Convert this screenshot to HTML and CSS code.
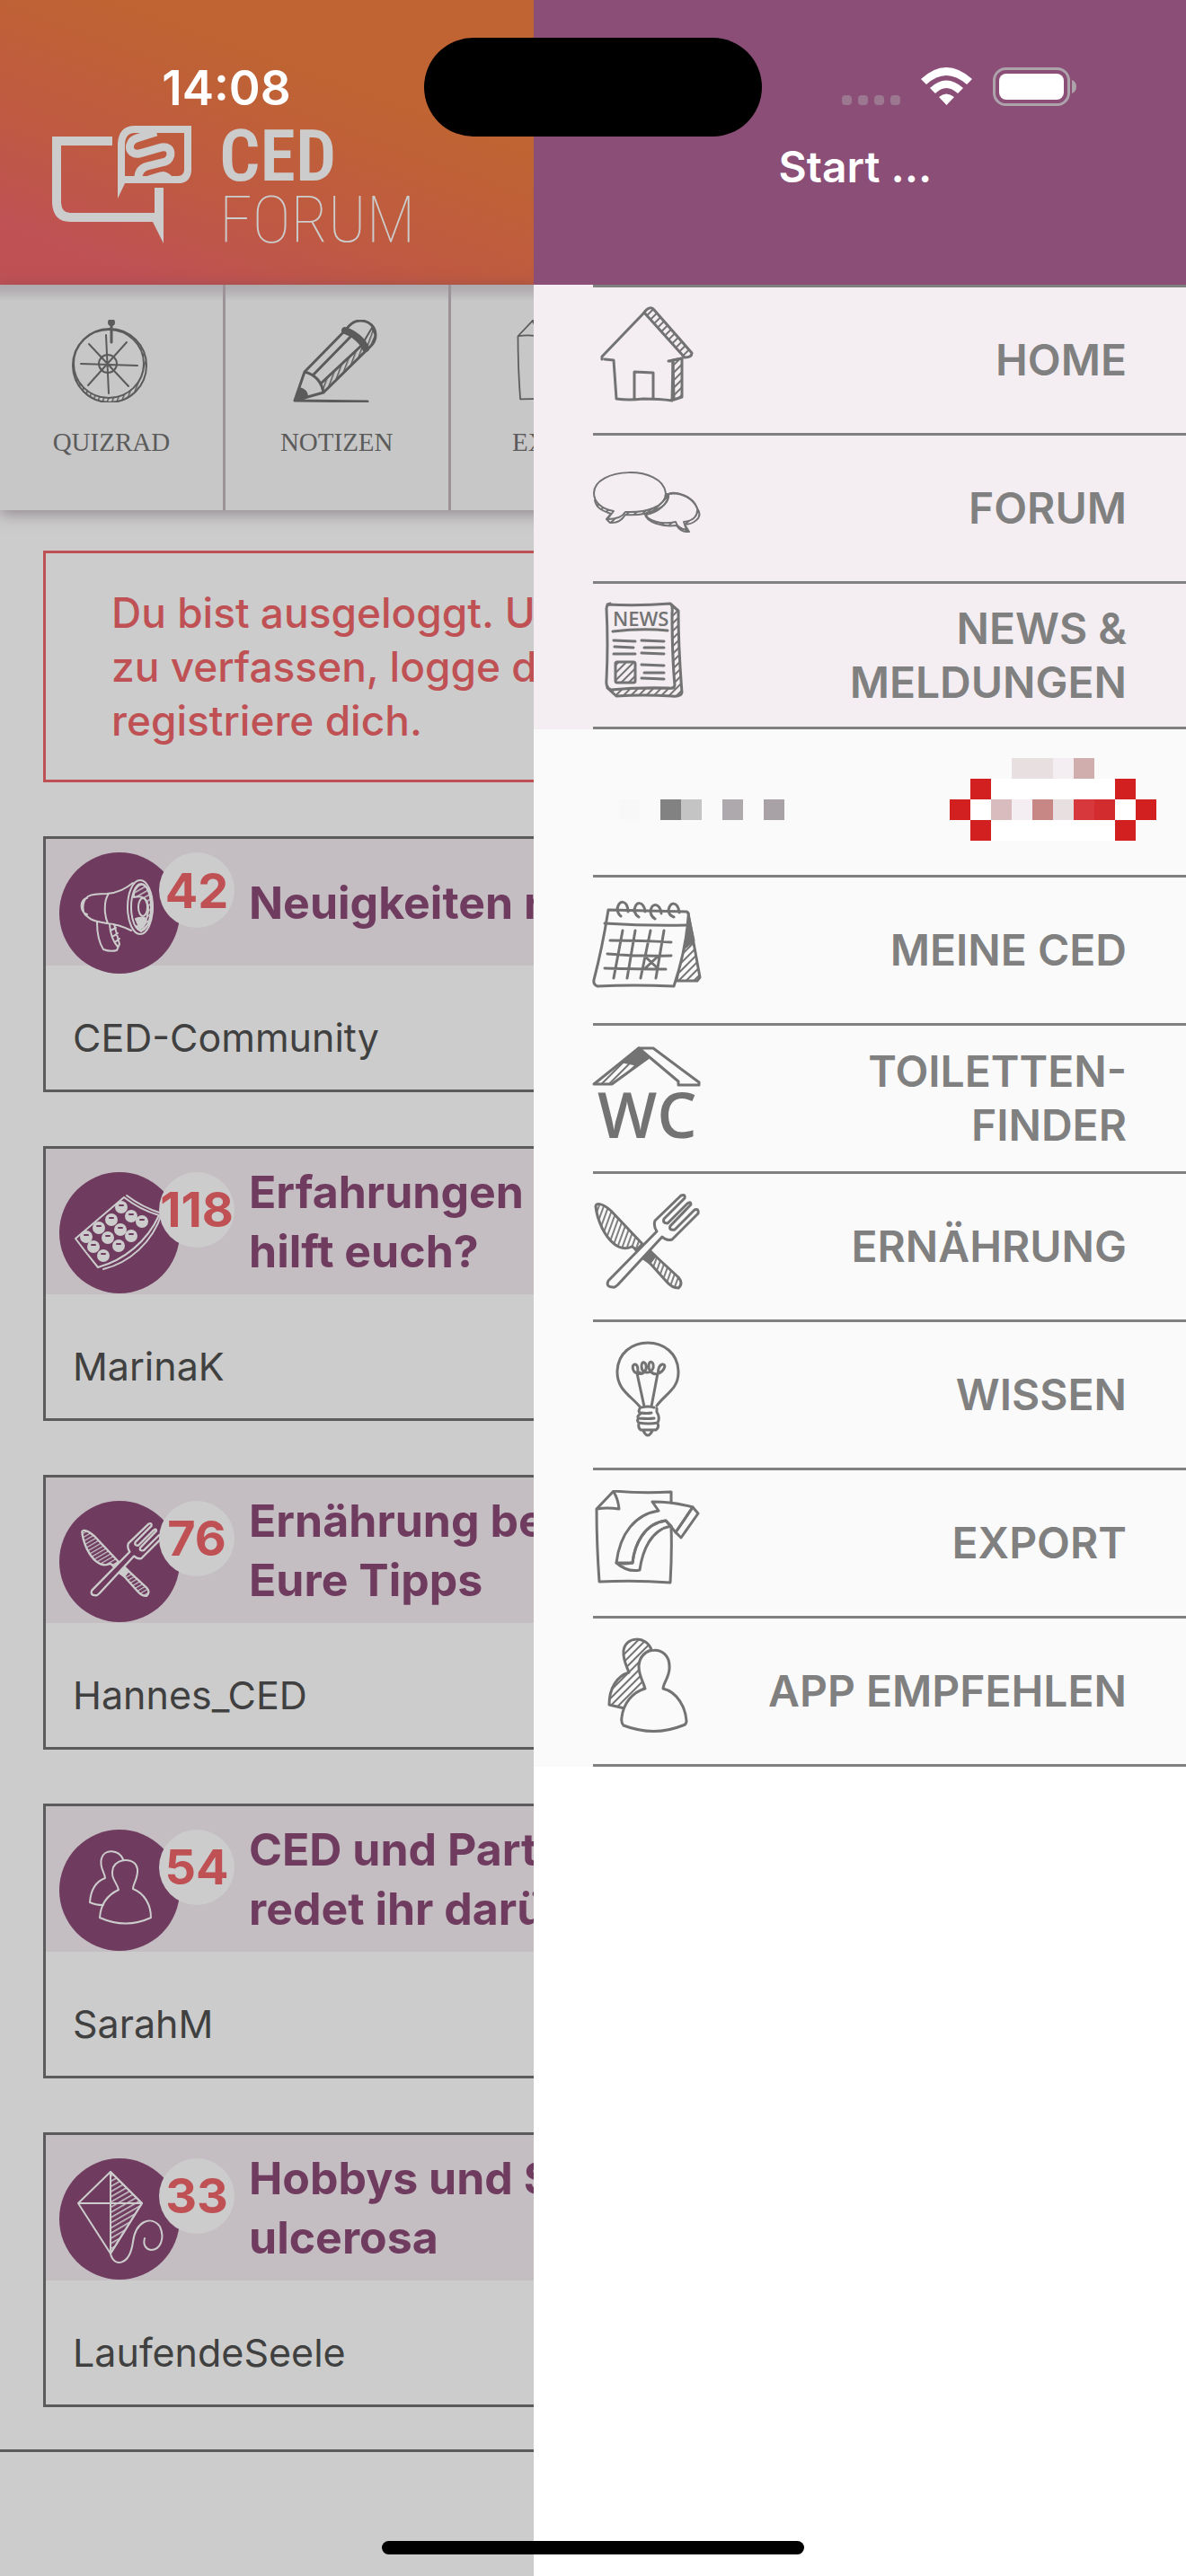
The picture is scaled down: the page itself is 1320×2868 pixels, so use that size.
FILE: index.html
```html
<!DOCTYPE html>
<html lang="de">
<head>
<meta charset="utf-8">
<meta name="viewport" content="width=device-width, initial-scale=1">
<title>CED Forum</title>
<link rel="stylesheet" href="styles.css">
</head>
<body>
<svg class="defs" aria-hidden="true">
  <defs>
    <pattern id="hatch" width="6" height="6" patternUnits="userSpaceOnUse" patternTransform="rotate(45)"><path d="M0 0V6" stroke="#737373" stroke-width="4"/></pattern>
    <pattern id="hatch-dark" width="5" height="5" patternUnits="userSpaceOnUse" patternTransform="rotate(20)"><path d="M0 0V5" stroke="#5b5b5b" stroke-width="3"/></pattern>
    <pattern id="hatch-back" width="5" height="5" patternUnits="userSpaceOnUse" patternTransform="rotate(20)"><path d="M0 0V5" stroke="#808080" stroke-width="4"/></pattern>
    <pattern id="hatch-light" width="5" height="5" patternUnits="userSpaceOnUse" patternTransform="rotate(60)"><path d="M0 0V5" stroke="#ccc" stroke-width="3"/></pattern>
    <symbol id="export" viewBox="0 0 120 106">
      <path d="M87 14V2Q55 4 23 1L4 21Q4 60 7 102Q48 100 86 103Q88 70 87 41M23 2Q28 10 29 21Q16 19 4 21"/>
      <path class="hatched" d="M111 19L117 26L98 53L92 47ZM81 34C57 37 46 61 44 81L26 81C34 88 42 91 52 89C55 68 64 44 87 40Z"/>
      <path d="M26 81C30 48 47 27 73 23L66 13Q90 13 111 19L92 47L81 34C57 37 46 61 44 81Q34 83 26 81Z"/>
    </symbol>
  </defs>
</svg>

<div class="app">
  <header class="app-header">
    <a class="logo" href="#">
      <svg class="logo-mark" viewBox="0 0 156 131" aria-hidden="true">
        <g fill="none" stroke="#ccc" stroke-width="10">
          <path d="M67 17H5V86Q6 102 20 102H124M119 69V102"/>
          <path stroke-width="8" d="M77 62V20Q78 4 92 4H151V50Q150 60 140 60H77Z"/>
          <path stroke-width="9" d="M116 7L94 14C83 18 84 33 97 31L122 24C135 22 134 37 126 40L106 45C99 47 96 51 96 58"/>
        </g>
        <path fill="#ccc" d="M110 103L124 131V96ZM73 56V81L82 62ZM98 58C106 57 114 52 124 51Q130 52 135 58Z"/>
      </svg>
      <span class="logo-name"><strong class="logo-ced">CED</strong><span class="logo-forum">FORUM</span></span>
    </a>
  </header>

  <nav class="toolbar" aria-label="Schnellzugriff">
    <button class="tool" type="button">
      <svg class="tool-icon" viewBox="0 0 104 92" aria-hidden="true">
        <ellipse class="hatched" cx="50" cy="51" rx="41" ry="41"/>
        <ellipse fill="#c7c7c7" cx="49" cy="49" rx="39" ry="38"/>
        <circle cx="48" cy="49" r="10"/>
        <path d="M46 17L49 82M18 49L81 51M27 27L71 74M69 25L26 73"/>
        <circle class="solid" cx="52" cy="3" r="3"/><path stroke-width="3" d="M52 5V25"/>
      </svg>
      <span>QUIZRAD</span>
    </button>
    <button class="tool" type="button">
      <svg class="tool-icon" viewBox="0 0 104 92" aria-hidden="true">
        <path class="hatched" d="M79 29L34 71L37 81L90 29L95 17L91 9Z"/>
        <path stroke-width="3" d="M5 90L16 58L62 11C67 4 72 1 78 1C88 1 95 8 95 17C95 22 93 26 90 29L37 81L5 90M67 19L25 62M79 29L34 71M16 58C27 61 35 69 37 81M5 90L86 91"/>
        <path stroke-width="8" d="M61 12C71 15 81 24 84 32"/>
        <path class="solid" d="M10 76Q19 78 19 86L5 90Z"/>
      </svg>
      <span>NOTIZEN</span>
    </button>
    <button class="tool" type="button">
      <svg class="tool-icon" viewBox="0 0 120 106" aria-hidden="true"><use href="#export"/></svg>
      <span>EXPORT</span>
    </button>
  </nav>

  <main class="content">
    <p class="notice">Du bist ausgeloggt. Um Beiträge<br>zu verfassen, logge dich ein oder<br>registriere dich.</p>

    <article class="card">
      <div class="card-head">
        <div class="media">
          <svg class="media-icon" viewBox="0 0 134 135" aria-hidden="true">
            <path class="hatched" d="M83 44Q92 28 100 43Q107 62 100 79L91 88L85 82Q98 84 99 62Q98 46 83 50Z"/>
            <path class="solid" d="M85 74Q90 72 95 73L97 77Q92 86 90 85Z"/>
            <ellipse cx="90" cy="61" rx="14" ry="30"/><ellipse cx="91" cy="61" rx="11" ry="26"/><ellipse cx="93" cy="61" rx="5" ry="10"/>
            <path d="M82 34C74 40 66 45 53 46C44 46 37 46 32 49C25 54 24 68 32 72C38 78 46 77 53 79C66 80 74 84 80 87M55 46C49 54 50 70 54 79M31 51C23 51 22 67 31 69M42 78C42 90 44 100 49 108Q57 111 64 109L67 102L61 80M56 80Q57 96 65 105M57 87L63 84M59 94L65 90M62 100L67 96"/>
          </svg>
          <span class="badge">42</span>
        </div>
        <h2 class="card-title">Neuigkeiten rund</h2>
      </div>
      <p class="author">CED-Community</p>
    </article>

    <article class="card">
      <div class="card-head">
        <div class="media">
          <svg class="media-icon" viewBox="0 0 134 135" aria-hidden="true">
            <path d="M18 74L72 28Q90 42 111 48C98 77 72 98 43 106Q30 90 18 74ZM75 26Q92 39 114 46C104 78 78 101 49 108"/>
            <g class="pills"><circle cx="69" cy="39" r="6"/><circle cx="58" cy="53" r="6"/><circle cx="44" cy="62" r="6"/><circle cx="30" cy="72" r="6"/><circle cx="80" cy="49" r="6"/><circle cx="68" cy="64" r="6"/><circle cx="54" cy="73" r="6"/><circle cx="38" cy="83" r="6"/><circle cx="92" cy="55" r="6"/><circle cx="80" cy="71" r="6"/><circle cx="66" cy="82" r="6"/><circle cx="49" cy="93" r="6"/></g>
            <path stroke="#6f3c5f" d="M67 37h4M56 51h4M42 60h4M28 70h4M78 47h4M66 62h4M52 71h4M36 81h4M90 53h4M78 69h4M64 80h4M47 91h4"/>
          </svg>
          <span class="badge">118</span>
        </div>
        <h2 class="card-title">Erfahrungen – was<br>hilft euch?</h2>
      </div>
      <p class="author">MarinaK</p>
    </article>

    <article class="card">
      <div class="card-head">
        <div class="media">
          <svg class="media-icon" viewBox="0 0 134 135" aria-hidden="true">
            <g transform="translate(23 24) scale(.78)" stroke-width="3">
              <path class="hatched" d="M3 14C3 10 10 10 20 19L55 56L48 63Q45 59 43 59C28 66 16 50 10 38Q4 25 3 14ZM69 69L95 93Q101 100 95 105Q88 105 82 98L63 77Z"/>
              <path class="solid" d="M63 63L69 69L63 77L56 72Z"/>
              <path class="on-disc" d="M71 42L17 97Q14 104 22 104Q24 105 28 101L77 48Q82 53 88 51L117 22Q118 16 113 18L91 40Q84 41 86 36L109 12Q109 8 105 11L83 33Q77 33 79 28L102 5Q103 0 98 2L69 30Q67 36 71 42Z"/>
            </g>
          </svg>
          <span class="badge">76</span>
        </div>
        <h2 class="card-title">Ernährung bei CED<br>Eure Tipps</h2>
      </div>
      <p class="author">Hannes_CED</p>
    </article>

    <article class="card">
      <div class="card-head">
        <div class="media">
          <svg class="media-icon" viewBox="0 0 134 135" aria-hidden="true">
            <path d="M71 33C66 22 50 21 47 32C44 42 51 48 51 54C40 58 35 67 34 81Q40 84 49 84M66 67C64 58 56 54 60 42C65 31 85 31 87 44C88 54 82 60 82 66C95 71 102 84 102 98Q74 111 45 98C46 84 53 73 66 67Z"/>
          </svg>
          <span class="badge">54</span>
        </div>
        <h2 class="card-title">CED und Partner:<br>redet ihr darüber?</h2>
      </div>
      <p class="author">SarahM</p>
    </article>

    <article class="card">
      <div class="card-head">
        <div class="media">
          <svg class="media-icon" viewBox="0 0 134 135" aria-hidden="true">
            <path class="hatched" d="M57 15L92 50L57 106Z"/>
            <path d="M57 15L92 50L57 106L21 50ZM57 15V106M21 50H92M57 106C60 121 78 121 82 93C85 70 102 63 112 76C118 90 112 102 102 102C96 101 93 96 95 89"/>
          </svg>
          <span class="badge">33</span>
        </div>
        <h2 class="card-title">Hobbys und Sport<br>ulcerosa</h2>
      </div>
      <p class="author">LaufendeSeele</p>
    </article>
  </main>
  <footer class="app-footer"></footer>
</div>

<aside class="drawer">
  <header class="drawer-header"><h1 class="drawer-title">Start ...</h1></header>
  <nav aria-label="Hauptmenü">
    <ul class="menu menu-primary">
      <li class="menu-row"><a class="menu-link" href="#">
        <svg class="menu-icon" viewBox="0 0 120 106" aria-hidden="true">
          <path class="hatched" d="M57 6C60 1 65 -1 68 3L110 51Q110 56 102 56ZM89 59L99 57V100L90 103Z"/>
          <path d="M10 58V55L57 6M13 58L23 59L26 102Q40 104 56 102Q74 102 88 104L89 60L84 60L99 57M46 102V72L67 73V102"/>
        </svg><span>HOME</span></a></li>
      <li class="menu-row"><a class="menu-link" href="#">
        <svg class="menu-icon" viewBox="0 0 120 106" aria-hidden="true">
          <g stroke-width="2">
            <path class="hatched" d="M84 43C90 40 110 43 116 59C124 70 110 77 102 77L107 85Q98 86 93 78C76 80 60 74 58 66Z"/>
            <path class="paper" d="M84 43C100 40 112 50 116 59C117 67 112 73 101 74L104 83Q94 81 92 74C76 78 60 72 59 66C72 64 84 54 84 43Z"/>
            <path class="hatched" d="M2 50C4 60 12 62 20 65L15 71L19 75Q30 76 36 66C60 68 86 58 84 43Z"/>
            <path class="paper" d="M1 42C1 13 77 10 81 42C81 57 60 64 36 63C32 70 24 71 16 71L23 62C10 60 1 52 1 42Z"/>
          </g>
        </svg><span>FORUM</span></a></li>
      <li class="menu-row menu-row-compact"><a class="menu-link" href="#">
        <svg class="menu-icon" viewBox="0 0 120 106" aria-hidden="true">
          <path class="hatched" d="M87 2L95 9Q95 50 99 100Q98 105 88 104Q55 102 26 104L16 95H90L88 40Z"/>
          <path class="paper" d="M16 2Q50 4 86 1Q89 3 88 12Q88 60 91 92Q90 96 84 95Q50 94 20 97Q14 95 15 86Q17 45 15 7Q15 2 19 1"/>
          <path d="M22 32Q55 28 83 31M23 42L47 43M24 49L45 50M23 57L47 57M54 42L79 43M57 50L79 50M54 56L79 57M54 69L79 70M57 78H79M54 84L79 85"/>
          <rect class="hatched" x="25" y="66" width="22" height="23" rx="2"/>
          <text class="icon-news" x="22" y="26">NEWS</text>
        </svg><span>NEWS &amp;<br>MELDUNGEN</span></a></li>
    </ul>
    <ul class="menu menu-secondary">
      <li class="menu-row"><a class="menu-link menu-promo" href="#" aria-label="Partner">
        <svg class="promo-label" viewBox="0 0 8 4" shape-rendering="crispEdges" aria-hidden="true"><path fill="#f9f8f9" d="M0 2h1v1H0z"/><path fill="#828282" d="M2 2h1v1H2z"/><path fill="#c4c4c4" d="M3 2h1v1H3z"/><path fill="#aea9ad" d="M5 2h1v1H5z"/><path fill="#a8a2a6" d="M7 2h1v1H7z"/></svg>
        <svg class="promo-logo" viewBox="0 0 10 4" shape-rendering="crispEdges" aria-hidden="true"><path fill="#fff" d="M1 1h8v3H1z"/><path fill="#e8dfe0" d="M3 0h2v1H3zM5 2h1v1H5z"/><path fill="#f4eef2" d="M5 0h1v1H5zM3 2h1v1H3z"/><path fill="#d1aeae" d="M6 0h1v1H6z"/><path fill="#d21f1f" d="M1 1h1v1H1zM8 1h1v1H8zM0 2h1v1H0zM9 2h1v1H9zM1 3h1v1H1zM8 3h1v1H8z"/><path fill="#d9bcbd" d="M2 2h1v1H2z"/><path fill="#c78784" d="M4 2h1v1H4z"/><path fill="#d6383c" d="M6 2h1v1H6z"/><path fill="#d32c2e" d="M7 2h1v1H7z"/></svg>
      </a></li>
      <li class="menu-row"><a class="menu-link" href="#">
        <svg class="menu-icon" viewBox="0 0 120 106" aria-hidden="true">
          <path class="hatched" d="M106 18L119 89L116 93H93Z"/>
          <path class="solid" d="M106 20L112 48L101 57Z"/>
          <path class="paper" d="M17 14Q60 15 104 16Q107 17 106 22C104 50 98 75 90 99Q45 97 5 99Q0 97 1 92C8 65 13 40 17 14Z"/>
          <path d="M13 29Q60 32 105 31M19 48Q55 48 87 50M16 63Q50 66 87 65M13 79Q50 80 81 80M33 37L23 90M47 37L38 90M64 37L53 90M79 37L70 90M58 66L72 79M72 66L57 80M27 15C27 2 39 2 39 16M31 21Q27 18 27 12M46 16C46 3 57 4 58 16M51 22Q46 19 46 13M64 17C64 5 75 6 76 18M69 24Q64 21 64 15M84 16C84 4 95 4 96 17M90 22Q84 20 84 14"/>
        </svg><span>MEINE CED</span></a></li>
      <li class="menu-row"><a class="menu-link" href="#">
        <svg class="menu-icon" viewBox="0 0 120 106" aria-hidden="true">
          <path class="hatched" d="M1 43L51 3L61 14L21 43Z"/>
          <path class="solid" d="M51 3L61 14L48 21L33 18Z"/>
          <path d="M51 3H67L118 41V44H95V40Z"/>
          <text class="icon-wc" x="5" y="103">WC</text>
        </svg><span>TOILETTEN-<br>FINDER</span></a></li>
      <li class="menu-row"><a class="menu-link" href="#">
        <svg class="menu-icon" viewBox="0 0 120 106" aria-hidden="true">
          <path class="hatched-back" d="M3 14C3 10 10 10 20 19L55 56L48 63Q45 59 43 59C28 66 16 50 10 38Q4 25 3 14ZM69 69L95 93Q101 100 95 105Q88 105 82 98L63 77Z"/>
          <path class="solid" d="M63 63L69 69L63 77L56 72Z"/>
          <path class="paper" d="M71 42L17 97Q14 104 22 104Q24 105 28 101L77 48Q82 53 88 51L117 22Q118 16 113 18L91 40Q84 41 86 36L109 12Q109 8 105 11L83 33Q77 33 79 28L102 5Q103 0 98 2L69 30Q67 36 71 42Z"/>
        </svg><span>ERNÄHRUNG</span></a></li>
      <li class="menu-row"><a class="menu-link" href="#">
        <svg class="menu-icon" viewBox="0 0 120 106" aria-hidden="true">
          <path d="M52 72C42 60 27 53 27 34C27 -10 95 -10 95 34C95 53 80 58 71 71M49 35L57 72M72 35L65 72M52 34C44 38 42 24 47 25C51 26 50 34 49 35Q57 37 59 30C60 22 54 20 54 27C54 36 64 36 67 29C68 21 62 20 62 27C62 34 68 37 73 35C80 32 82 24 77 25C73 26 72 33 73 35M53 73Q62 71 68 73M53 73Q49 77 53 80Q48 83 51 85Q62 86 68 85M53 79Q60 80 65 79M71 74V78Q75 84 72 90Q62 92 51 90Q48 87 51 85M51 91Q50 96 53 98H70Q74 95 72 91M56 99Q61 109 66 99"/>
        </svg><span>WISSEN</span></a></li>
      <li class="menu-row"><a class="menu-link" href="#">
        <svg class="menu-icon" viewBox="0 0 120 106" aria-hidden="true"><use href="#export"/></svg><span>EXPORT</span></a></li>
      <li class="menu-row"><a class="menu-link" href="#">
        <svg class="menu-icon" viewBox="0 0 120 106" aria-hidden="true">
          <path class="hatched" d="M65 13C60 -3 36 -3 34 14C33 24 38 32 40 38C27 42 18 55 18 74L35 78C40 66 48 60 58 56C56 45 47 34 54 21Q58 15 65 13Z"/>
          <path class="paper" d="M58 56C56 48 51 42 51 31C52 8 85 7 85 31C86 42 78 50 78 56C94 60 103 77 104 92Q104 96 100 97Q68 110 34 97Q31 94 32 88C34 72 44 60 58 56Z"/>
        </svg><span>APP EMPFEHLEN</span></a></li>
    </ul>
  </nav>
</aside>

<div class="status-bar">
  <time class="clock">14:08</time>
  <div class="island"></div>
  <svg class="status-icons" viewBox="0 0 262 43" aria-hidden="true">
    <g fill="#9c7790"><rect x="0" y="31" width="11" height="11" rx="4"/><rect x="18" y="31" width="11" height="11" rx="4"/><rect x="36" y="31" width="11" height="11" rx="4"/><rect x="54" y="31" width="11" height="11" rx="4"/></g>
    <path fill="#fff" d="M88 13Q116 -13 145 13L139 19Q116 -1 94 19ZM98 23Q116 6 135 23L129 29Q116 17 104 29ZM108 33Q116 26 125 33L116.500 42Z"/>
    <rect x="169.500" y="1.500" width="83" height="40" rx="13" fill="none" stroke="#ada3ab" stroke-width="3"/>
    <rect x="175" y="7" width="72" height="29" rx="8" fill="#fff"/>
    <path fill="#ada3ab" d="M256 14Q261 16 261 21.500Q261 27 256 29Z"/>
  </svg>
</div>
<div class="home-indicator"></div>
</body>
</html>
```
FILE: styles.css
```css
* {
  box-sizing: border-box;
}

body {
  position: relative;
  min-height: 100vh;
  margin: 0;
  overflow-x: hidden;
  background: #ccc;
  font-family: Inter, "Liberation Sans", sans-serif;
}

h1, h2, p, ul {
  margin: 0;
  padding: 0;
}

a {
  color: inherit;
  text-decoration: none;
}

svg {
  flex: none;
}

.defs {
  position: absolute;
  width: 0;
  height: 0;
}

/* App header */
.app-header {
  min-height: 317px;
  padding: 140px 0 0 58px;
  background: linear-gradient(20deg, #bf5155 8%, #bf5a42 24%, #bf6432 46%);
}

.logo {
  display: flex;
  gap: 30px;
  color: #ccc;
}

.logo-mark {
  width: 156px;
  height: 131px;
}

.logo-name {
  display: flex;
  flex-direction: column;
  font-family: "Roboto Condensed", "Liberation Sans Narrow", Roboto, sans-serif;
}

.logo-ced {
  font-size: 80px;
  font-weight: 600;
  line-height: 68px;
}

.logo-forum {
  font-size: 73px;
  font-weight: 100;
  line-height: 74px;
}

/* Toolbar */
.toolbar {
  position: relative;
  display: flex;
  height: 251px;
  background: linear-gradient(#aea9ad, #b3aeb2 6px, #c7c7c7 18px);
  box-shadow: 0 4px 16px rgba(90, 70, 85, .5);
}

.tool {
  display: flex;
  flex: 0 0 19%;
  flex-direction: column;
  align-items: center;
  gap: 28px;
  padding: 39px 0 0;
  border: 0;
  border-right: 3px solid #9c9298;
  background: none;
  color: #5b5b5b;
  font-family: "Liberation Serif", serif;
  font-size: 29px;
  line-height: 32px;
}

.tool-icon {
  width: 104px;
  height: 92px;
  fill: none;
  stroke: #5b5b5b;
  stroke-width: 2;
  stroke-linecap: round;
  stroke-linejoin: round;
}

.tool-icon .solid {
  fill: #5b5b5b;
}

.tool-icon .hatched {
  fill: url(#hatch-dark);
}

/* Content */
.content {
  display: flex;
  flex-direction: column;
  gap: 60px;
  padding: 45px 48px 47px;
}

.notice {
  padding: 36px 73px;
  border: 3px solid #bf5155;
  color: #bf5155;
  font-size: 46px;
  font-weight: 500;
  line-height: 60px;
  white-space: nowrap;
}

.card {
  border: 3px solid #5b5b5b;
}

.card-head {
  display: flex;
  align-items: center;
  gap: 16px;
  padding: 15px;
  background: #c4bdc2;
}

.media {
  position: relative;
  flex: none;
  width: 195px;
  height: 111px;
}

.media-icon {
  display: block;
  width: 134px;
  height: 135px;
  border-radius: 50%;
  background: #6f3c5f;
  fill: none;
  stroke: #ccc;
  stroke-width: 2;
  stroke-linecap: round;
  stroke-linejoin: round;
}

.media-icon .hatched {
  fill: url(#hatch-light);
}

.media-icon .solid,
.pills {
  fill: #ccc;
}

.on-disc {
  fill: #6f3c5f;
}

.badge {
  position: absolute;
  top: 0;
  right: 0;
  display: flex;
  align-items: center;
  justify-content: center;
  width: 84px;
  height: 84px;
  border-radius: 50%;
  background: #ccc;
  color: #bf5155;
  font-size: 54px;
  font-weight: 700;
}

.card-title {
  color: #6f3c5f;
  font-size: 50px;
  font-weight: 700;
  line-height: 66px;
  white-space: nowrap;
}

.author {
  padding: 50px 30px 28px;
  color: #3f403f;
  font-size: 43px;
  line-height: 60px;
}

.app-footer {
  border-top: 3px solid #5b5b5b;
}

/* Drawer */
.drawer {
  position: absolute;
  top: 0;
  right: 0;
  bottom: 0;
  width: 55%;
  background: #fff;
}

.drawer-header {
  min-height: 317px;
  padding: 156px 10px 0 0;
  background: #8b4e77;
  color: #fff;
}

.drawer-title {
  font-size: 48px;
  font-weight: 600;
  line-height: 60px;
  text-align: center;
}

.menu {
  padding-left: 66px;
  list-style: none;
}

.menu-primary {
  background: #f4eef2;
}

.menu-secondary {
  background: #fafafa;
}

.menu-row {
  border-bottom: 3px solid #808080;
}

.menu-primary .menu-row:first-child {
  border-top: 3px solid #808080;
}

.menu-link {
  display: flex;
  align-items: center;
  justify-content: space-between;
  min-height: 162px;
  padding-right: 66px;
  color: #808080;
  font-size: 48px;
  font-weight: 600;
  line-height: 60px;
  text-align: right;
}

.menu-row-compact .menu-link {
  min-height: 159px;
}

.menu-icon {
  width: 120px;
  height: 106px;
  margin-bottom: 12px;
  overflow: visible;
  fill: none;
  stroke: #737373;
  stroke-width: 3;
  stroke-linecap: round;
  stroke-linejoin: round;
}

.menu-icon .hatched {
  fill: url(#hatch);
}

.menu-icon .hatched-back {
  fill: url(#hatch-back);
}

.menu-icon .solid {
  fill: #737373;
}

.menu-icon .paper {
  fill: #fafafa;
}

.menu-primary .menu-icon .paper {
  fill: #f4eef2;
}

.icon-news,
.icon-wc {
  fill: #737373;
  stroke: none;
  font-family: "Open Sans", sans-serif;
}

.icon-news {
  font-size: 22px;
}

.icon-wc {
  font-size: 70px;
  font-weight: 600;
}

.menu-promo {
  padding: 0 33px 6px 29px;
}

.promo-label {
  width: 184px;
  height: 92px;
}

.promo-logo {
  width: 230px;
  height: 92px;
}

/* System overlays */
.status-bar {
  position: absolute;
  top: 42px;
  left: 0;
  right: 0;
  display: grid;
  grid-template-columns: 1fr 376px 1fr;
  color: #fff;
}

.clock {
  padding: 24px 0 0 32px;
  font-size: 53px;
  font-weight: 600;
  line-height: 64px;
  text-align: center;
}

.island {
  height: 110px;
  border-radius: 55px;
  background: #000;
}

.status-icons {
  width: 262px;
  height: 43px;
  margin: 33px 0 0 89px;
}

.home-indicator {
  position: absolute;
  bottom: 24px;
  left: 50%;
  width: 470px;
  height: 15px;
  margin-left: -235px;
  border-radius: 8px;
  background: #000;
}
```
